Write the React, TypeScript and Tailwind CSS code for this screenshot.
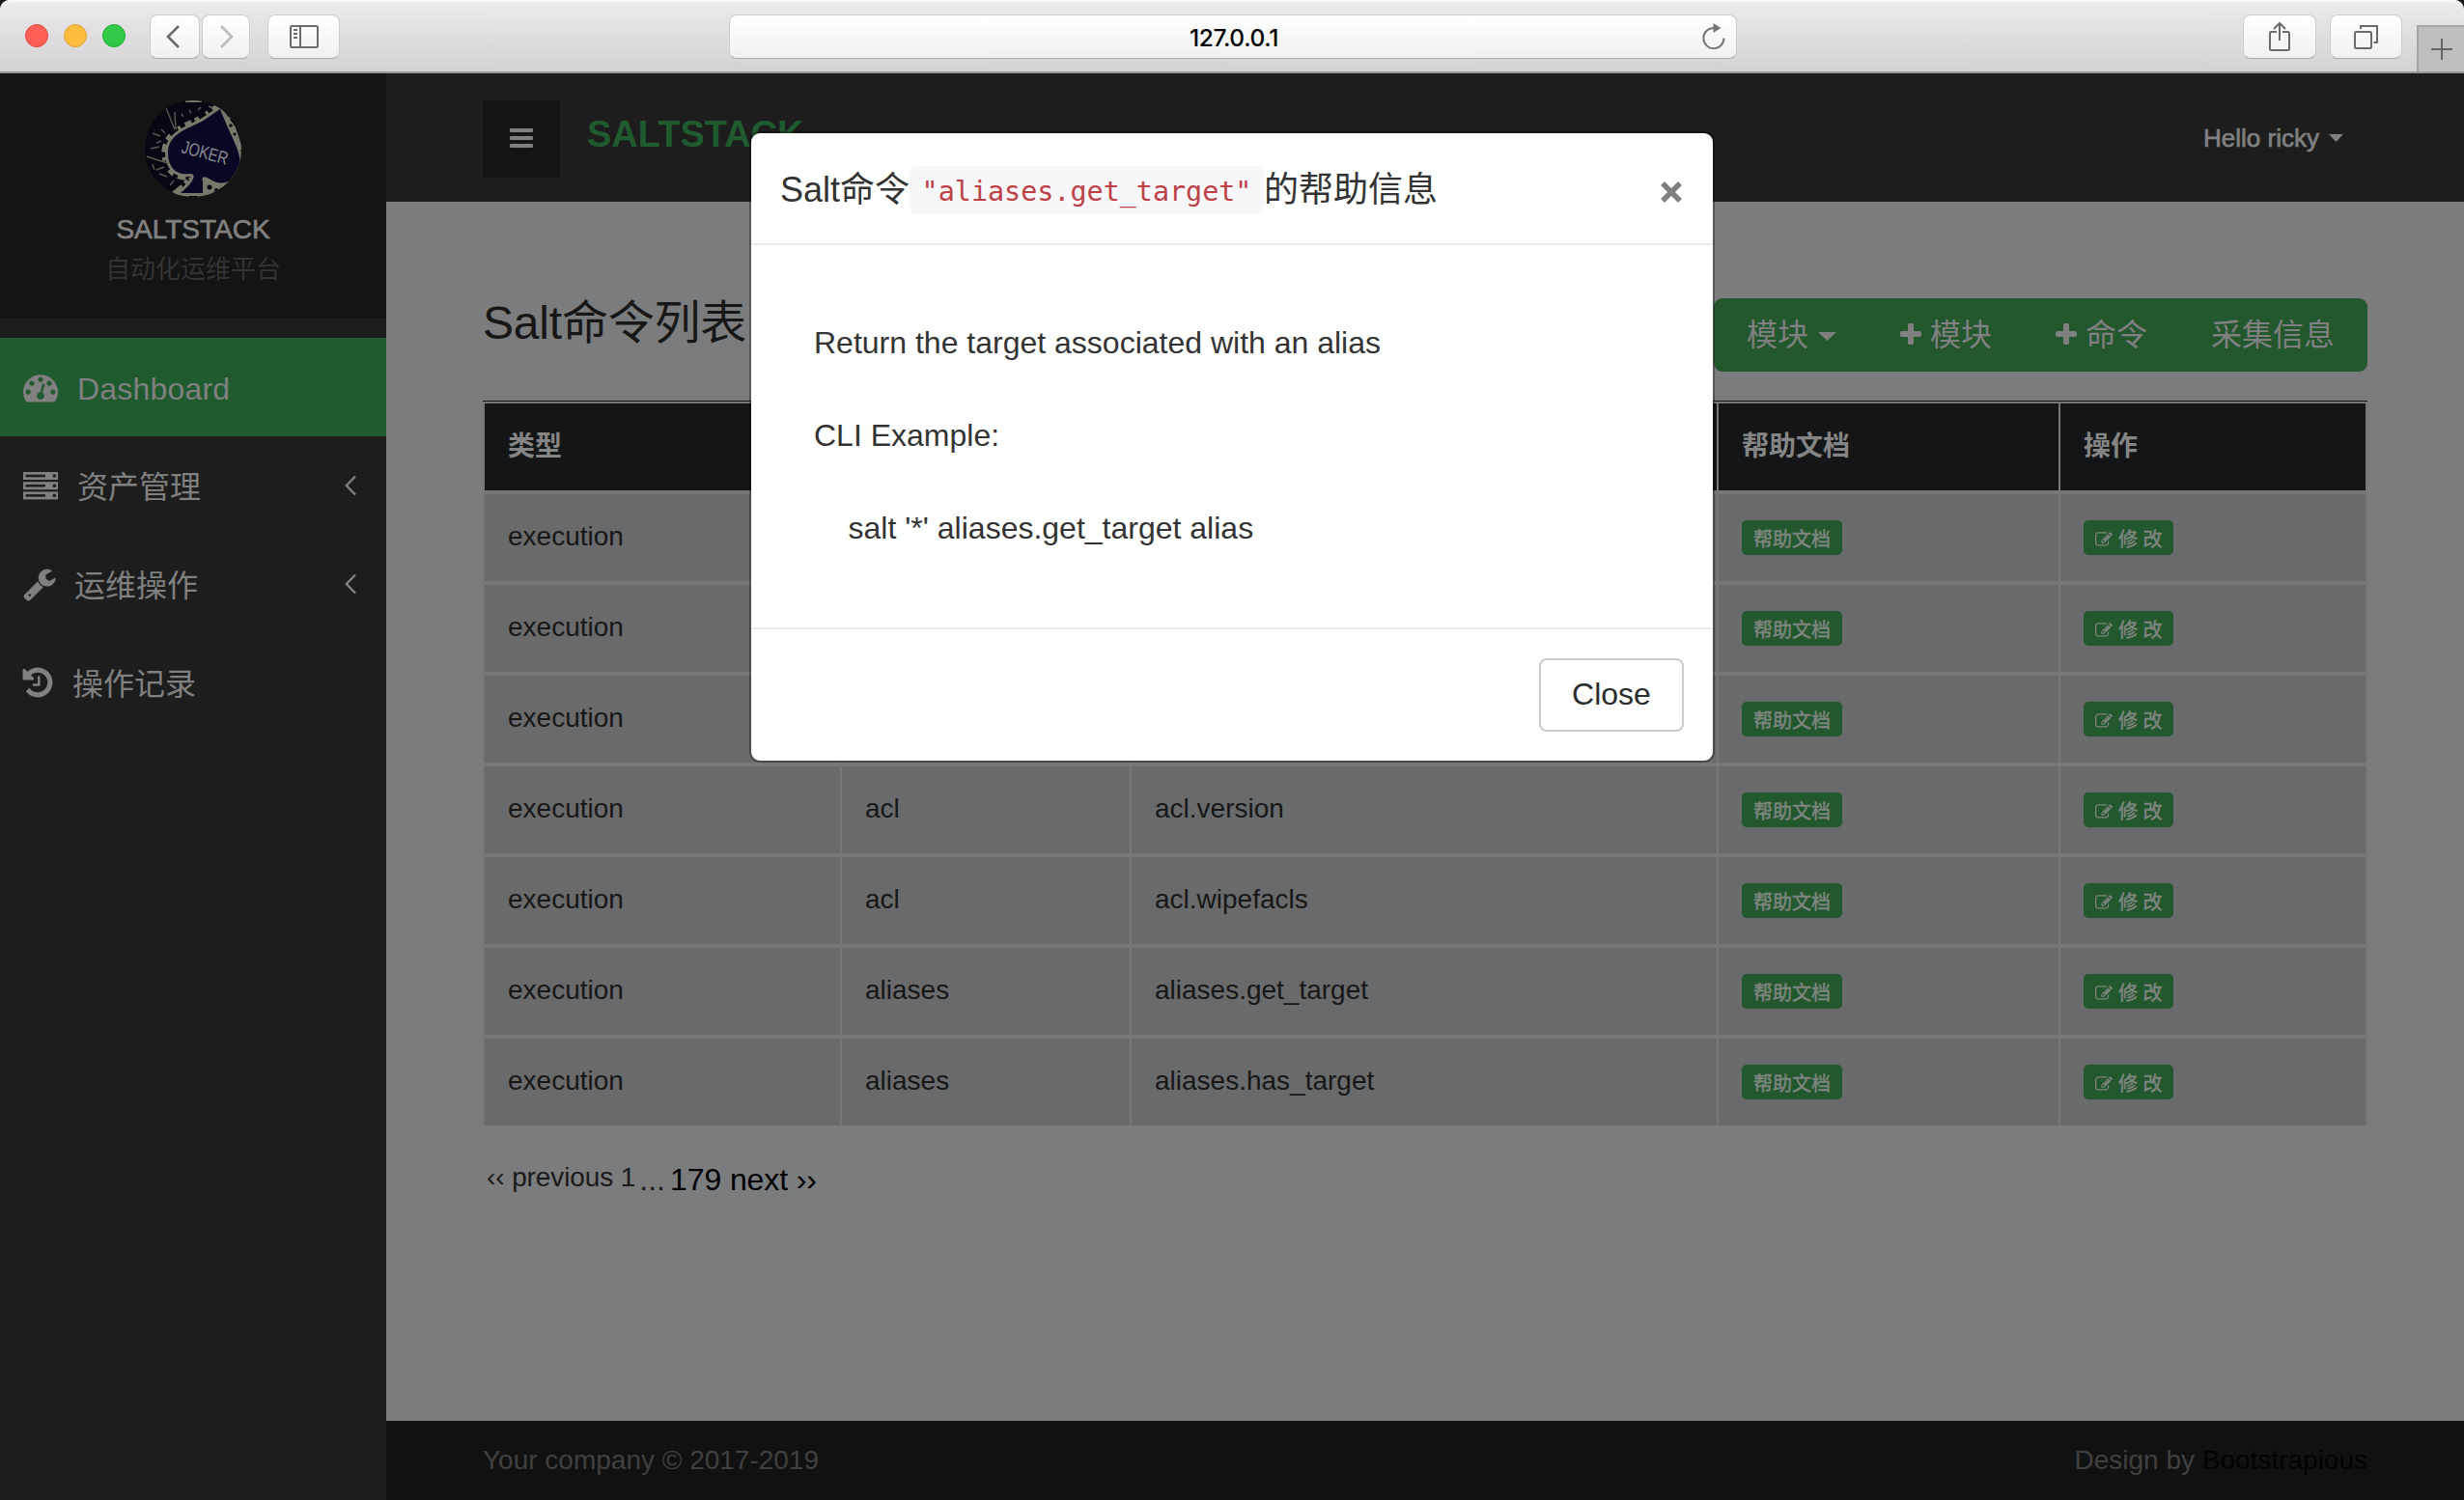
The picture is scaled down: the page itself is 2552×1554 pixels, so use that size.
import React from "react";

const TACHOMETER =
  "M384 1152q0-53-37.5-90.5t-90.5-37.5-90.5 37.5-37.5 90.5 37.5 90.5 90.5 37.5 90.5-37.5 37.5-90.5zm192-448q0-53-37.5-90.5t-90.5-37.5-90.5 37.5-37.5 90.5 37.5 90.5 90.5 37.5 90.5-37.5 37.5-90.5zm428 481l101-382q6-26-7.5-48.5t-38.5-29.5-48 6.5-30 39.5l-101 382q-60 5-107 43.5t-63 98.5q-20 77 20 146t117 89 146-20 89-117q16-60-6-117t-72-91zm660-33q0-53-37.5-90.5t-90.5-37.5-90.5 37.5-37.5 90.5 37.5 90.5 90.5 37.5 90.5-37.5 37.5-90.5zm-640-640q0-53-37.5-90.5t-90.5-37.5-90.5 37.5-37.5 90.5 37.5 90.5 90.5 37.5 90.5-37.5 37.5-90.5zm448 192q0-53-37.5-90.5t-90.5-37.5-90.5 37.5-37.5 90.5 37.5 90.5 90.5 37.5 90.5-37.5 37.5-90.5zm320 448q0 261-141 483-19 29-54 29h-1402q-35 0-54-29-141-221-141-483 0-182 71-348t191-286 286-191 348-71 348 71 286 191 191 286 71 348z";
const WRENCH =
  "M448 1472q0-26-19-45t-45-19-45 19-19 45 19 45 45 19 45-19 19-45zm644-420l-682 682q-37 37-90 37-52 0-91-37l-106-108q-38-36-38-90 0-53 38-91l681-681q39 98 114.5 173.5t173.5 114.5zm634-435q0 39-23 106-47 134-164.5 217.5t-258.5 83.5q-185 0-316.5-131.5t-131.5-316.5 131.5-316.5 316.5-131.5q58 0 121.5 16.5t107.5 46.5q16 11 16 28t-16 28l-293 169v224l193 107q5-3 79-48.5t135.5-81 70.5-35.5q15 0 23.5 10t8.5 25z";
const HISTORY =
  "M1664 896q0 156-61 298t-164 245-245 164-298 61q-172 0-327-72.5t-264-204.5q-7-10-6.5-22.5t8.5-20.5l137-138q10-9 25-9 16 2 23 12 73 95 179 147t225 52q104 0 198.5-40.5t163.5-109.5 109.5-163.5 40.5-198.5-40.5-198.5-109.5-163.5-163.5-109.5-198.5-40.5q-98 0-188 35.5t-160 101.5l137 138q31 30 14 69-17 40-59 40h-448q-26 0-45-19t-19-45v-448q0-42 40-59 39-17 69 14l130 129q107-101 244.5-156.5t284.5-55.5q156 0 298 61t245 164 164 245 61 298zm-640-288v448q0 14-9 23t-23 9h-320q-14 0-23-9t-9-23v-64q0-14 9-23t23-9h224v-352q0-14 9-23t23-9h64q14 0 23 9t9 23z";
const PLUS =
  "M1600 736v192q0 40-28 68t-68 28h-416v416q0 40-28 68t-68 28h-192q-40 0-68-28t-28-68v-416h-416q-40 0-68-28t-28-68v-192q0-40 28-68t68-28h416v-416q0-40 28-68t68-28h192q40 0 68 28t28 68v416h416q40 0 68 28t28 68z";
const EDIT =
  "M888 1184l116-116-152-152-116 116v56h96v96h56zm440-720q-16-16-33 1l-350 350q-17 17-1 33t33-1l350-350q17-17 1-33zm80 594v190q0 119-84.5 203.5t-203.5 84.5h-832q-119 0-203.5-84.5t-84.5-203.5v-832q0-119 84.5-203.5t203.5-84.5h832q63 0 117 25 15 7 18 23 3 17-9 29l-49 49q-14 14-32 8-23-6-45-6h-832q-66 0-113 47t-47 113v832q0 66 47 113t113 47h832q66 0 113-47t47-113v-126q0-13 9-22l64-64q15-15 35-7t20 29zm-96-738l288 288-672 672h-288v-288zm444 132l-92 92-288-288 92-92q28-28 68-28t68 28l152 152q28 28 28 68t-28 68z";

function Toolbutton({ className, children }: { className: string; children: React.ReactNode }) {
  return (
    <div
      className={`flex h-[46px] items-center justify-center rounded-[8px] border border-[#cfcdd0] border-b-[#a9a7aa] bg-linear-to-b from-white to-[#f0f0f0] ${className}`}
    >
      {children}
    </div>
  );
}

function BrowserBar() {
  return (
    <div className="flex h-[76px] shrink-0 items-start overflow-hidden rounded-t-[10px] border-b-2 border-[#979797] bg-linear-to-b from-[#edebee] to-[#d3d1d4] shadow-[inset_0_2px_0_#f8f7f8]">
      <div className="mt-[25px] ml-[26px] flex gap-4">
        <div className="size-6 rounded-full border border-[#e0443e] bg-[#ff5f57]" />
        <div className="size-6 rounded-full border border-[#dea035] bg-[#fdbe3f]" />
        <div className="size-6 rounded-full border border-[#1dad2b] bg-[#33c948]" />
      </div>
      <Toolbutton className="mt-[15px] ml-[25px] w-[52px]">
        <svg className="mr-[5px] h-6 w-[14px]" viewBox="0 0 14 24" fill="none" stroke="#6b6b6b" strokeWidth="2.6">
          <path d="M13 1L2 12l11 11" />
        </svg>
      </Toolbutton>
      <Toolbutton className="mt-[15px] ml-[2px] w-[50px]">
        <svg className="ml-[2px] h-6 w-[14px]" viewBox="0 0 14 24" fill="none" stroke="#bcbcbc" strokeWidth="2.6">
          <path d="M1 1l11 11L1 23" />
        </svg>
      </Toolbutton>
      <Toolbutton className="mt-[15px] ml-[18px] w-[75px]">
        <svg className="h-6 w-[30px]" viewBox="0 0 30 24" fill="none" stroke="#6b6b6b" strokeWidth="2">
          <rect x="1" y="1" width="28" height="22" rx="1.5" />
          <path d="M11 1v22M4 5h4M4 9h4M4 13h4" />
        </svg>
      </Toolbutton>
      <Toolbutton className="mt-[15px] ml-[403px] w-[1044px]">
        <span className="flex-1 pt-[2px] pl-[476px] font-[Inter,sans-serif] text-[24.500px] leading-[46px] font-medium tracking-[-0.4px] text-black">
          127.0.0.1
        </span>
        <svg className="mr-[11px] mb-[2px] h-[27px] w-6" viewBox="0 0 24 27" fill="none" stroke="#757575" strokeWidth="2">
          <path d="M22.5 15.5A10.6 10.6 0 1 1 12 5" />
          <path d="M11.500 0v10l8-5z" fill="#757575" stroke="none" />
        </svg>
      </Toolbutton>
      <Toolbutton className="mt-[15px] ml-[524px] w-[76px]">
        <svg className="mb-[1px] h-[31px] w-[22px]" viewBox="0 0 22 31" fill="none" stroke="#6b6b6b" strokeWidth="2">
          <path d="M8 11H2.5A1.5 1.5 0 0 0 1 12.500V28.500A1.500 1.500 0 0 0 2.500 30h17a1.500 1.500 0 0 0 1.500-1.500V12.500A1.500 1.500 0 0 0 19.500 11H14" />
          <path d="M11 20V2M5 8l6-6 6 6" />
        </svg>
      </Toolbutton>
      <Toolbutton className="mt-[15px] ml-[14px] w-[75px]">
        <svg className="h-[25px] w-[25px]" viewBox="0 0 25 25" fill="none" stroke="#6b6b6b" strokeWidth="2">
          <rect x="1" y="7" width="17" height="17" rx="1.5" />
          <path d="M7 4V1h17v17h-3.500" />
        </svg>
      </Toolbutton>
      <div className="mt-[26px] ml-[15px] flex h-[48px] w-[49px] items-center justify-center border-t-2 border-l-2 border-[#a6a4a7] bg-[#bfbdc0]">
        <svg className="size-[22px]" viewBox="0 0 22 22" stroke="#666" strokeWidth="2">
          <path d="M11 0v22M0 11h22" />
        </svg>
      </div>
    </div>
  );
}

const SPADE =
  "M78 9L62 20C50 28 26 32 24 52C23 68 32 78 46 76C54 75 52 84 37 96H60V84C58 78 62 78 68 82C80 90 94 84 98 70C102 56 90 40 78 9Z";

function Avatar() {
  return (
    <svg className="h-[100px] w-[100px]" viewBox="0 0 100 100">
      <defs>
        <clipPath id="face">
          <circle cx="50" cy="50" r="50" />
        </clipPath>
      </defs>
      <g clipPath="url(#face)">
        <rect width="100" height="100" fill="#070712" />
        <path d={SPADE} fill="none" stroke="#77776a" strokeWidth="6" />
        <path d={SPADE} fill="none" stroke="#77776a" strokeWidth="13" strokeDasharray="7 5 3 9 5 4" />
        <path d="M80 8l14 20 8 24-6-4zM62 82l18 2 14-2-12 16H60z" fill="#77776a" />
        <path d="M42 1h17" stroke="#77776a" strokeWidth="2" />
        <path
          d="M22 8l9 22M31 12l1 18M8 34l8 3M6 50l9-2M2 58l12 4 10 3M12 72l8-3M15 76l8 3M26 88l4-5M46 10l2 3M38 14l2 3M55 10l3-3M66 6l4 2M12 44l5-2M17 30l4 4M8 66l2 6"
          stroke="#5a5a53"
          strokeWidth="1.400"
          fill="none"
        />
        <path d={SPADE} fill="#080724" />
        <g fill="#070712">
          <circle cx="89" cy="26" r="1.800" />
          <circle cx="93" cy="35" r="1.500" />
          <circle cx="67" cy="90" r="2.500" />
          <circle cx="74" cy="93" r="2" />
        </g>
        <text
          x="37"
          y="54"
          fill="#8b8b93"
          fontFamily="Liberation Sans, sans-serif"
          fontSize="19"
          textLength="49"
          lengthAdjust="spacingAndGlyphs"
          transform="rotate(15 37 54)"
        >
          JOKER
        </text>
      </g>
    </svg>
  );
}

function FaIcon({ d, className }: { d: string; className: string }) {
  return (
    <svg className={className} viewBox="0 0 1792 1792" fill="currentColor">
      <path d={d} />
    </svg>
  );
}

function Angle() {
  return (
    <svg className="mr-[31px] ml-auto h-[22px] w-3" viewBox="0 0 12 22" fill="none" stroke="#808080" strokeWidth="2.4">
      <path d="M11 1.500L1.800 11L11 20.500" />
    </svg>
  );
}

function Sidebar() {
  return (
    <aside className="flex w-[400px] shrink-0 flex-col bg-[#1d1d1d]">
      <div className="flex h-[254px] flex-col items-center bg-[#141414] pt-7">
        <Avatar />
        <div className="mt-[14px] text-[28px] leading-10 text-[#808080] [-webkit-text-stroke:0.7px_#808080]">SALTSTACK</div>
        <div className="mt-px text-[26px] leading-10 text-[#333]">自动化运维平台</div>
      </div>
      <nav className="mt-5 text-[32px] leading-[42px] text-[#808080]">
        <div className="flex h-[102px] items-center bg-[#1f5b2f] pl-6">
          <FaIcon d={TACHOMETER} className="size-9" />
          <span className="mt-[3px] ml-[20px] tracking-[0.2px]">Dashboard</span>
        </div>
        <div className="flex h-[102px] items-center pl-6">
          <svg className="h-[29px] w-9" viewBox="0 0 36 29">
            {[0, 10.2, 20.4].map((y) => (
              <g key={y}>
                <rect y={y} width="36" height="8" fill="#808080" />
                <rect x="2.500" y={y + 2.7} width="20.500" height="2.600" fill="#1d1d1d" />
                <circle cx="32.300" cy={y + 4} r="1.800" fill="#1d1d1d" />
              </g>
            ))}
          </svg>
          <span className="mt-[3px] ml-5">资产管理</span>
          <Angle />
        </div>
        <div className="flex h-[102px] items-center pl-6">
          <FaIcon d={WRENCH} className="mr-[-2px] ml-[-1px] size-9" />
          <span className="mt-[3px] ml-5">运维操作</span>
          <Angle />
        </div>
        <div className="flex h-[102px] items-center pl-6">
          <FaIcon d={HISTORY} className="mr-[-2px] ml-[-3px] size-9" />
          <span className="mt-[3px] ml-5">操作记录</span>
        </div>
      </nav>
    </aside>
  );
}

function Caret({ className }: { className: string }) {
  return (
    <svg className={className} viewBox="0 0 18 9" fill="#808080" preserveAspectRatio="none">
      <path d="M0 0h18L9 9z" />
    </svg>
  );
}

const rows: [string, string][] = [
  ["", ""],
  ["", ""],
  ["", ""],
  ["acl", "acl.version"],
  ["acl", "acl.wipefacls"],
  ["aliases", "aliases.get_target"],
  ["aliases", "aliases.has_target"],
];

const GRID = "grid grid-cols-[368px_298px_606px_352px_316px] gap-x-[2px]";

function CommandTable() {
  return (
    <div className="mt-[30px] h-[752px] overflow-hidden border-t border-[#141516] text-[28px] leading-[42px] text-[#171717]">
      <div className="w-[1952px] bg-[#777777] px-[2px] pt-[2px]">
        <div className={GRID}>
          {["类型", "", "", "帮助文档", "操作"].map((h, i) => (
            <div key={i} className="flex h-[90px] items-center bg-[#141516] pl-6 font-bold text-[#858585]">
              {h}
            </div>
          ))}
        </div>
        {rows.map(([mod, cmd], i) => (
          <div key={i} className={`mt-1 ${GRID}`}>
            {["execution", mod, cmd].map((t, j) => (
              <div key={j} className="flex h-[90px] items-center bg-[#696a6b] pb-[3px] pl-6">
                {t}
              </div>
            ))}
            <div className="flex h-[90px] items-center bg-[#696a6b] pl-6">
              <span className="flex h-9 w-[104px] items-center justify-center rounded-[5px] bg-[#23572d] pt-[3px] text-[20px] text-[#7f867f] [-webkit-text-stroke:0.5px_#7f867f]">
                帮助文档
              </span>
            </div>
            <div className="flex h-[90px] items-center bg-[#696a6b] pl-6">
              <span className="flex h-9 w-[93px] items-center rounded-[5px] bg-[#23572d] pt-[3px] pl-3 text-[20px] text-[#7f867f]">
                <FaIcon d={EDIT} className="mr-[6px] size-[18px] shrink-0" />
                <span className="whitespace-nowrap [-webkit-text-stroke:0.5px_#7f867f]">修 改</span>
              </span>
            </div>
          </div>
        ))}
      </div>
    </div>
  );
}

function Pagination() {
  return (
    <div className="mt-[30px] flex items-baseline pl-[4px] leading-[42px]">
      <span className="text-[28px] tracking-[-0.1px] text-[#1a1a1a]">‹‹ previous 1</span>
      <span className="relative top-1 ml-[4px] text-[32px] text-[#1a1a1a]">...</span>
      <span className="relative top-1 ml-[5px] text-[32px] tracking-[-0.1px] text-black">179 next ››</span>
    </div>
  );
}

function Content() {
  return (
    <div className="flex flex-1 flex-col">
      <header className="flex h-[133px] items-center bg-[#1d1d1d] px-[100px]">
        <div className="mt-[3px] flex size-20 flex-col items-center justify-center gap-[4px] bg-[#141414] pb-[3px]">
          <div className="h-1 w-6 rounded-[1px] bg-[#808080]" />
          <div className="h-1 w-6 rounded-[1px] bg-[#808080]" />
          <div className="h-1 w-6 rounded-[1px] bg-[#808080]" />
        </div>
        <div className="mt-[-8px] ml-[28px] text-[38px] leading-[50px] font-bold text-[#1f5b2f]">SALTSTACK</div>
        <div className="mr-[25px] ml-auto flex items-center text-[26px] leading-10 text-[#808080] [-webkit-text-stroke:0.7px_#808080]">
          Hello ricky
          <Caret className="ml-[10px] h-2 w-[15px]" />
        </div>
      </header>
      <main className="flex-1 bg-[#7b7c7d] px-[100px] pt-[100px]">
        <div className="flex h-[76px] items-start">
          <h1 className="mt-[-11px] text-[48px] leading-[74px] tracking-[-0.2px] text-[#171717]">Salt命令列表</h1>
          <div className="ml-auto flex h-[76px] w-[677px] items-center rounded-[9px] bg-[#23572d] pb-px pl-[34px] text-[32px] leading-[48px] whitespace-nowrap text-[#808080]">
            <div className="flex w-[160px] items-center">
              <span>模块</span>
              <Caret className="mt-[3px] ml-[10px] h-[9px] w-[19px]" />
            </div>
            <div className="flex w-[161px] items-center">
              <FaIcon d={PLUS} className="mr-[3px] ml-[-4px] size-7" />
              <span className="ml-[3px]">模块</span>
            </div>
            <div className="flex w-[160px] items-center">
              <FaIcon d={PLUS} className="mr-[3px] ml-[-4px] size-7" />
              <span className="ml-[3px]">命令</span>
            </div>
            <span>采集信息</span>
          </div>
        </div>
        <CommandTable />
        <Pagination />
      </main>
      <footer className="flex h-[82px] justify-between bg-[#111] px-[100px] pt-5 text-[28px] leading-[42px] text-[#404040]">
        <span>Your company © 2017-2019</span>
        <span>
          Design by <span className="text-[#030303]">Bootstrapious</span>
        </span>
      </footer>
    </div>
  );
}

function HelpModal() {
  return (
    <div className="absolute top-[138px] left-[778px] flex h-[650px] w-[996px] flex-col rounded-[9px] bg-white text-[#333] shadow-[0_0_0_2px_rgba(0,0,0,0.3)]">
      <div className="flex h-[116px] shrink-0 items-start justify-between border-b-2 border-[#ececec] px-[30px] pt-[28px]">
        <h2 className="flex items-center text-[36px] leading-[56px] whitespace-nowrap">
          <span className="mt-[3px]">Salt命令</span>
          <code className="mt-[3px] flex h-[50px] w-[367px] items-center justify-center rounded-[8px] bg-[#f7f7f9] pt-[3px] font-['DejaVu_Sans_Mono',monospace] text-[28.400px] text-[#bd4147]">
            "aliases.get_target"
          </code>
          <span className="mt-[3px]">的帮助信息</span>
        </h2>
        <svg className="mt-[22px] mr-[2px] h-[22px] w-[22px]" viewBox="0 0 22 22" stroke="#7f7f7f" strokeWidth="5.500">
          <path d="M2 2l18 18M20 2L2 20" />
        </svg>
      </div>
      <div className="flex h-[396px] flex-col gap-12 pt-[77px] pl-[65px] text-[32px] leading-[48px] whitespace-pre">
        <p>Return the target associated with an alias</p>
        <p>CLI Example:</p>
        <p>{"    salt '*' aliases.get_target alias"}</p>
      </div>
      <div className="flex h-[138px] justify-end border-t-2 border-[#ececec] pt-[30px] pr-[30px]">
        <button className="flex h-[76px] w-[150px] items-center justify-center rounded-[8px] border-2 border-[#ccc] pb-[2px] text-[32px] text-[#292b2c]">
          Close
        </button>
      </div>
    </div>
  );
}

export default function App() {
  return (
    <div className="relative flex h-[1554px] w-[2552px] flex-col overflow-hidden bg-[#1a1a1a] font-['Liberation_Sans','Noto_Sans_CJK_SC',sans-serif]">
      <BrowserBar />
      <div className="flex flex-1">
        <Sidebar />
        <Content />
      </div>
      <HelpModal />
    </div>
  );
}
